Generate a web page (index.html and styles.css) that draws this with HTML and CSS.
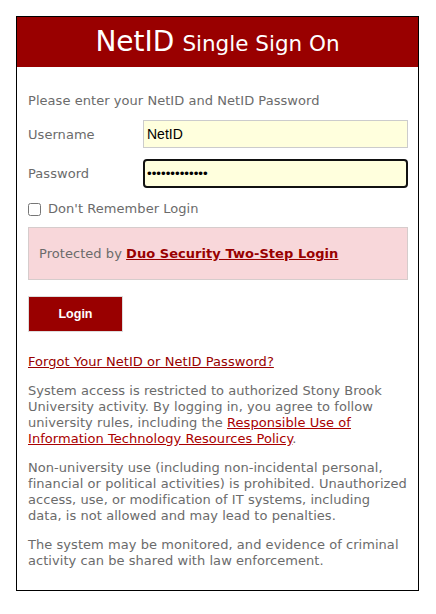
FILE: index.html
```html
<!DOCTYPE html>
<html lang="en">
<head>
<meta charset="utf-8">
<title>NetID Single Sign On</title>
<link rel="stylesheet" href="styles.css">
</head>
<body>
<div class="box">
  <div class="header"><span class="big">NetID</span> <span class="small">Single Sign On</span></div>
  <div class="content">
    <p class="intro">Please enter your NetID and NetID Password</p>
    <div class="row">
      <label class="label" for="u">Username</label>
      <input class="field" id="u" type="text" value="NetID">
    </div>
    <div class="row row-pw">
      <label class="label" for="p">Password</label>
      <input class="field field-focus" id="p" type="password" value="passwordpassw">
    </div>
    <div class="check">
      <input class="cb" type="checkbox" id="c">
      <label for="c">Don't Remember Login</label>
    </div>
    <div class="duo">Protected by <a class="duo-link" href="#">Duo Security Two-Step Login</a></div>
    <button class="btn" type="button">Login</button>
    <p class="forgot"><a class="link" href="#">Forgot Your NetID or NetID Password?</a></p>
    <p class="para">System access is restricted to authorized Stony Brook University activity. By logging in, you agree to follow university rules, including the <a class="link2" href="#">Responsible Use of Information Technology Resources Policy</a>.</p>
    <p class="para">Non-university use (including non-incidental personal, financial or political activities) is prohibited. Unauthorized access, use, or modification of IT systems, including<br>data, is not allowed and may lead to penalties.</p>
    <p class="para">The system may be monitored, and evidence of criminal activity can be shared with law enforcement.</p>
  </div>
</div>
</body>
</html>
```
FILE: styles.css
```css
html, body {
  margin: 0;
  padding: 0;
  background: #fff;
}
body {
  padding: 16px 0 0 16px;
  font-family: "DejaVu Sans", Verdana, sans-serif;
  font-size: 13px;
  line-height: 16px;
  letter-spacing: 0.05px;
  color: #6b6b6b;
}
.box {
  box-sizing: border-box;
  width: 403px;
  height: 575px;
  border: 1px solid #000;
}
.header {
  height: 50px;
  background: #990000;
  color: #fff;
  display: flex;
  align-items: center;
  justify-content: center;
  gap: 8px;
  line-height: 1;
  letter-spacing: 0;
}
.big {
  font-size: 28px;
}
.small {
  font-size: 21.5px;
  padding-top: 3px;
}
.content {
  padding: 26px 10px 20px 11px;
}
.intro {
  margin: 0;
}
.row {
  display: grid;
  grid-template-columns: 115px 1fr;
  align-items: center;
  margin-top: 11px;
}
.row-pw {
  margin-top: 11px;
}
.label {
  line-height: 16px;
  padding-top: 1px;
}
.field {
  box-sizing: border-box;
  height: 28px;
  margin: 0;
  border: 1px solid #cccccc;
  background: #ffffdd;
  padding: 0 3px;
  font-family: "Liberation Sans", Arial, sans-serif;
  font-size: 14px;
  letter-spacing: 0;
  color: #000;
  outline: none;
}
.field-focus {
  height: 29px;
  border: 2px solid #111;
  border-radius: 4px;
  padding: 0 2px;
  font-size: 13.33px;
}
.check {
  display: flex;
  align-items: center;
  margin-top: 13px;
  height: 16px;
}
.cb {
  width: 13px;
  height: 13px;
  margin: 0 7px 0 0;
}
.duo {
  margin-top: 10px;
  background: #f8d7da;
  border: 1px solid #d6cccc;
  padding: 18px 10px 17px 10px;
}
.duo-link {
  color: #990000;
  font-weight: bold;
  text-decoration: underline;
}
.btn {
  display: block;
  box-sizing: border-box;
  margin-top: 16px;
  width: 95px;
  height: 36px;
  background: #990000;
  border: 1px solid #dddddd;
  color: #fff;
  font-family: "Liberation Sans", Arial, sans-serif;
  font-size: 12.5px;
  font-weight: bold;
  letter-spacing: 0;
  padding: 0;
}
.forgot {
  margin: 22px 0 0 0;
}
.link {
  color: #990000;
  text-decoration: underline;
}
.link2 {
  color: #aa0000;
  text-decoration: underline;
}
.para {
  margin: 13px -3px 0 0;
}
```
